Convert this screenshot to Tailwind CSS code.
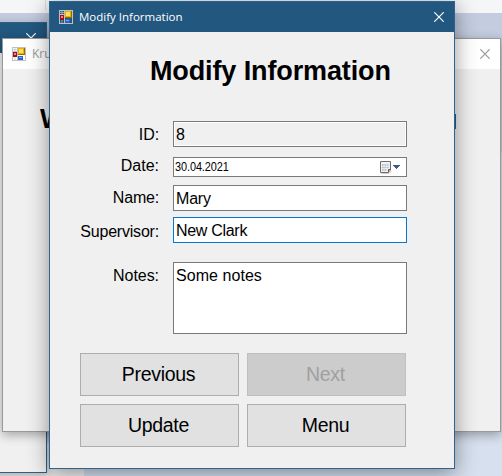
<!DOCTYPE html>
<html lang="en">
<head>
<meta charset="utf-8">
<title>Modify Information</title>
<script src="https://cdn.jsdelivr.net/npm/@tailwindcss/browser@4"></script>
</head>
<body class="relative h-[476px] w-[502px] overflow-hidden bg-[#d6e0ee] font-['Liberation_Sans',Arial,sans-serif] text-black">
<svg class="hidden">
  <symbol id="form-icon" viewBox="0 0 14 14">
    <path d="M0 0H14V14H0Z" fill="#c0c0c0"/>
    <path d="M1 1h4v3H1zM1 10h4v3H1zM11 9h2v4h-2zM6 8h7v1H6z" fill="currentColor"/>
    <path d="M3 1v3M1 2.500h4M3 10v3" stroke="#b7c2cc" stroke-width=".7"/>
    <path d="M1 5h4v5H1z" fill="#a40e16"/><path d="M2 6h2v2H2z" fill="#e88b88"/>
    <path d="M6 1h7v7H6z" fill="#9b6a00"/><path d="M6 1h6v6H6z" fill="#e8b100"/><path d="M7 2h4v4H7z" fill="#ffdf63"/>
    <path d="M6 9h5v4H6z" fill="#2c62c8"/><path d="M7 10h3v1H7z" fill="#79a9f5"/>
  </symbol>
  <symbol id="close-icon" viewBox="0 0 10 10"><path d="M.3 .3l9.400 9.400M9.700 .3L.3 9.700" stroke="currentColor" stroke-width="1.200"/></symbol>
</svg>

<!-- desktop behind the windows -->
<div class="h-[13px] bg-[#f4f6f8]"><div class="ml-[45px] h-[10px] w-px bg-[#d9dce0]"></div></div>
<div class="h-[140px] bg-[#c4cde0]"></div>
<div class="absolute bottom-0 left-0 h-[33px] w-[84px] bg-[#f0f0f0]"></div>

<!-- rear left window -->
<section class="absolute -left-[160px] top-[22px] flex h-[451px] w-[207px] flex-col border border-[#2b608c] bg-[#f0f0f0] shadow-[0_3px_10px_rgba(0,0,0,0.3)]">
  <header class="flex h-[30px] shrink-0 items-center justify-end bg-[#22577f] pr-[10px] text-white"><svg class="size-[10px]"><use href="#close-icon"/></svg></header>
</section>

<!-- middle window -->
<section class="absolute left-[2px] top-[38px] flex h-[394px] w-[499px] flex-col border border-[#999] bg-[#f0f0f0] shadow-[0_3px_10px_rgba(0,0,0,0.32)]">
  <header class="flex h-[30px] shrink-0 items-center bg-white pl-[9px] pr-[10px] text-[#999]">
    <svg class="size-[14px] text-white"><use href="#form-icon"/></svg>
    <span class="ml-[6px] font-['Open_Sans',sans-serif] text-[12px]">Kru</span>
    <svg class="ml-auto size-[10px]"><use href="#close-icon"/></svg>
  </header>
  <div class="flex justify-between pl-[37px] pr-[44px] pt-[34px]">
    <span class="text-[27px] leading-[32px] font-bold">W</span>
    <span class="mt-[11px] h-[15px] w-[7px] bg-[#22628f]"></span>
  </div>
</section>

<!-- active dialog -->
<main class="absolute left-[49px] top-px flex h-[468px] w-[406px] flex-col border border-[#2b6391] bg-[#f0f0f0] shadow-[0_4px_20px_rgba(0,0,0,0.42)]">
  <header class="flex h-[30px] shrink-0 items-center bg-[#22577f] pl-[9px] pr-[10px] text-white">
    <svg class="size-[14px] text-[#22577f]"><use href="#form-icon"/></svg>
    <span class="ml-[6px] font-['Open_Sans',sans-serif] text-[11.5px]">Modify Information</span>
    <svg class="ml-auto size-[10px]"><use href="#close-icon"/></svg>
  </header>
  <h1 class="pl-[100px] pt-[23px] text-[27px] leading-[32px] font-bold tracking-[-0.12px] whitespace-nowrap">Modify Information</h1>
  <form class="mt-[34px] grid grid-cols-[109px_234px] gap-x-[14px] text-[16px] leading-[20px] tracking-[-0.2px]">
    <label class="h-[36px] pt-[4px] text-right tracking-[-0.1px]">ID:</label>
    <div class="h-[26px] border border-[#7a7a7a] p-[2px] pt-[3px] shadow-[inset_0_0_0_1px_#fff]">8</div>
    <label class="-mt-px h-[29px] text-right tracking-normal">Date:</label>
    <div class="flex h-[20px] items-center border border-[#7a7a7a] bg-white pl-px pr-[5px]">
      <span class="origin-left scale-x-[0.91] text-[12px] tracking-[-0.1px]">30.04.2021</span>
      <svg class="ml-auto h-[13px] w-[21px]" viewBox="0 0 21 13">
        <path d="M1.500 12.500H9L11.500 10" stroke="#cfcac8" fill="none"/>
        <path d="M.5 .5H10.500V9L8 11.500H.5Z" fill="#eef1f5" stroke="#796a68"/>
        <path d="M10.500 8.500H8.500V11.500" fill="none" stroke="#5f5250"/>
        <path d="M2 4h7M2 6.500h7M2 9h5" stroke="#b3bbc7" stroke-width="1.600" stroke-dasharray="1.700 .7"/>
        <path d="M13 4h7v1h-1v1h-1v1h-1v1h-1V7h-1V6h-1V5h-1z" fill="#425a85"/>
      </svg>
    </div>
    <label class="h-[32px] pt-[3px] text-right">Name:</label>
    <div class="h-[26px] border border-[#7a7a7a] bg-white p-[2px] pt-[3px]">Mary</div>
    <label class="h-[45px] pt-[5px] text-right">Supervisor:</label>
    <div class="h-[26px] border border-[#0078d7] bg-white p-[2px] pt-[3px] tracking-[-0.3px]">New Clark</div>
    <label class="pt-[4px] text-right tracking-[-0.05px]">Notes:</label>
    <div class="h-[72px] border border-[#7a7a7a] bg-white p-[2px] pt-[3px] tracking-[0.05px]">Some notes</div>
  </form>
  <div class="ml-[30px] mt-[19px] grid grid-cols-[159px_159px] grid-rows-[43px_43px] gap-x-2 gap-y-2 text-[19.5px] tracking-[-0.3px]">
    <button class="border border-[#adadad] bg-[#e1e1e1] pr-[2px]">Previous</button>
    <button class="border border-[#bfbfbf] bg-[#ccc] pr-[2px] text-[#a0a0a0]" disabled>Next</button>
    <button class="border border-[#adadad] bg-[#e1e1e1] pr-[2px]">Update</button>
    <button class="border border-[#adadad] bg-[#e1e1e1] pr-[2px]">Menu</button>
  </div>
</main>
</body>
</html>
